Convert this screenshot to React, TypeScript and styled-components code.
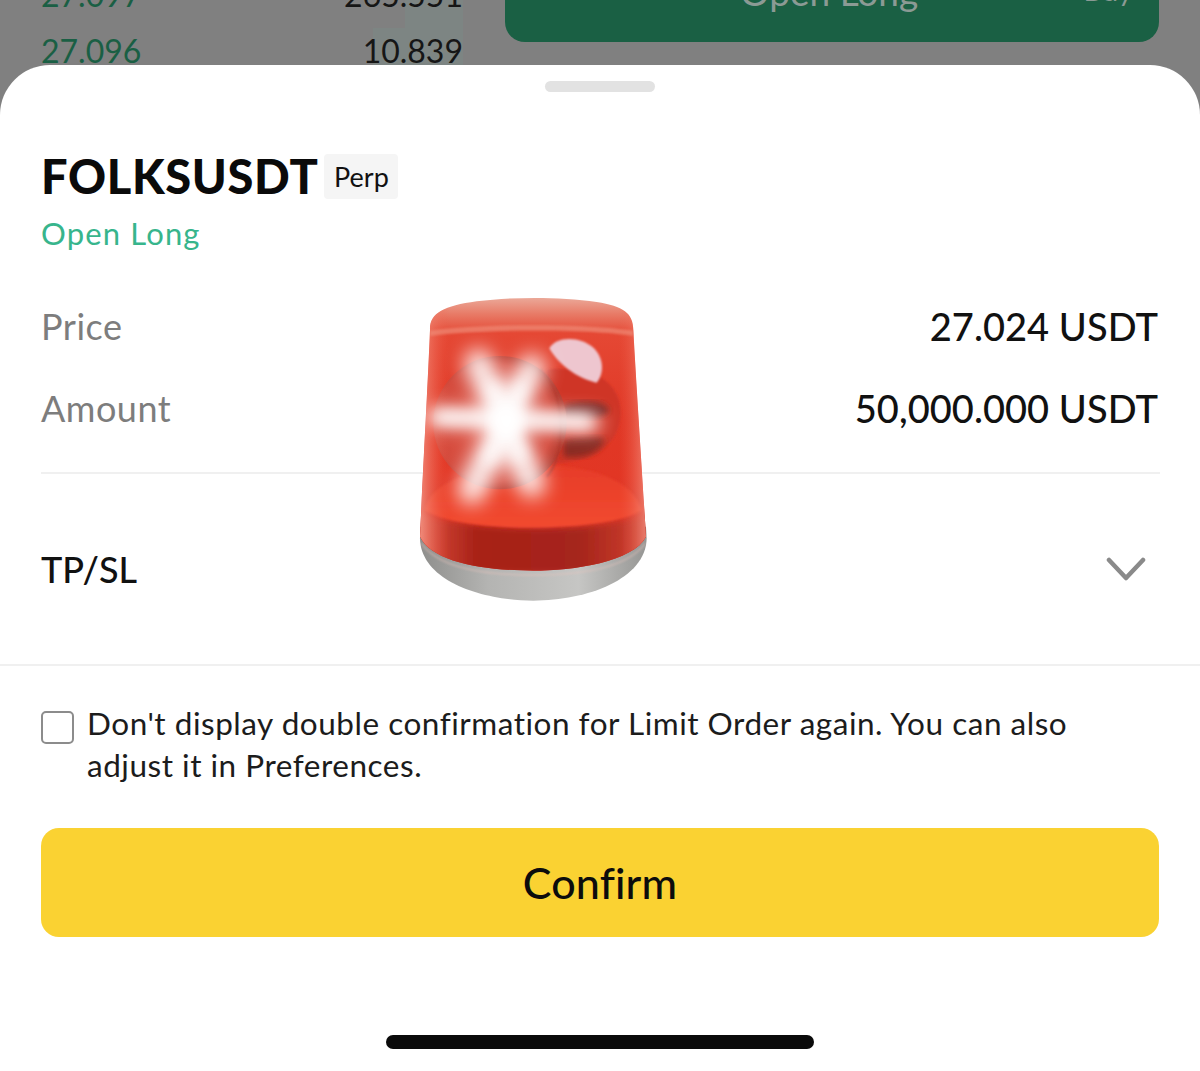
import React from "react";
import styled, { createGlobalStyle } from "styled-components";

const Global = createGlobalStyle`
  html, body { margin: 0; padding: 0; background: #808080; }
  body { font-family: "Lato", "Liberation Sans", sans-serif; }
`;

const Page = styled.div`
  position: relative;
  width: 1200px;
  height: 1071px;
  overflow: hidden;
  display: flex;
  flex-direction: column;
`;

const Backdrop = styled.div`
  height: 65px;
  flex: none;
  overflow: hidden;
  background: #808080;
`;

const BackdropInner = styled.div`
  display: grid;
  grid-template-columns: 422px 654px;
  column-gap: 42px;
  align-items: start;
  padding-left: 41px;
  margin-top: -33px;
`;

const Book = styled.div`
  display: flex;
  flex-direction: column;
`;

const BookRow = styled.div`
  position: relative;
  height: 56px;
  display: flex;
  align-items: center;
  justify-content: space-between;
  font-size: 32px;
  line-height: 56px;
`;

const BookDepth = styled.div<{ $width: number }>`
  position: absolute;
  right: 0;
  top: 5px;
  bottom: -5px;
  width: ${(p) => p.$width}px;
  background: #7a8a86;
  opacity: 0.5;
`;

const BookPrice = styled.span`
  color: #1a5f44;
  position: relative;
`;

const BookAmount = styled.span`
  color: #161616;
  position: relative;
`;

const OpenButton = styled.div`
  box-sizing: border-box;
  height: 75px;
  padding: 3px 26px 0 235px;
  background: #1a6044;
  border-radius: 0 0 20px 20px;
  display: flex;
  align-items: flex-start;
  justify-content: space-between;
  color: #8b9a94;
  font-size: 37px;
  line-height: 44px;
`;

const BuyLabel = styled.span`
  font-size: 29px;
  line-height: 40px;
`;

const Sheet = styled.div`
  flex: 1;
  background: #fff;
  border-radius: 50px 50px 0 0;
  display: flex;
  flex-direction: column;
`;

const Grabber = styled.div`
  align-self: center;
  width: 110px;
  height: 11px;
  margin-top: 16px;
  border-radius: 6px;
  background: #e2e2e2;
`;

const Head = styled.div`
  padding: 61px 41px 0;
`;

const TitleRow = styled.div`
  display: flex;
  align-items: center;
  height: 46px;
`;

const Title = styled.h1`
  margin: 0;
  font-size: 47px;
  line-height: 46px;
  font-weight: 900;
  color: #0a0a0a;
  letter-spacing: 0.65px;
`;

const Tag = styled.span`
  margin-left: 6px;
  width: 74px;
  height: 45px;
  display: flex;
  align-items: center;
  justify-content: center;
  background: #f5f5f5;
  border-radius: 4px;
  font-size: 27px;
  color: #111;
`;

const Side = styled.div`
  margin-top: 14px;
  font-size: 31px;
  line-height: 40px;
  letter-spacing: 1.15px;
  color: #37b58c;
`;

const Rows = styled.div`
  margin: 51px 40px 0 41px;
  display: flex;
  flex-direction: column;
  border-bottom: 2px solid #f0f0f0;
  padding-bottom: 42px;
  row-gap: 38px;
`;

const Row = styled.div`
  display: flex;
  justify-content: space-between;
  align-items: center;
  height: 44px;
  padding-right: 2px;
`;

const Label = styled.span`
  font-size: 36px;
  letter-spacing: 0.5px;
  color: #7d7d7d;
`;

const Value = styled.span`
  font-size: 38px;
  font-weight: 500;
  letter-spacing: 0.05px;
  color: #111;
`;

const Toggle = styled.div`
  height: 190px;
  display: flex;
  align-items: center;
  justify-content: space-between;
  padding: 0 54px 0 41px;
  border-bottom: 2px solid #f0f0f0;
`;

const ToggleLabel = styled.span`
  font-size: 36px;
  font-weight: 500;
  color: #111;
`;

const ChevronGlyph = styled.svg`
  margin-top: 2px;
`;

const Notice = styled.label`
  display: flex;
  gap: 13px;
  padding: 36px 100px 0 41px;
`;

const Box = styled.span`
  flex: none;
  width: 29px;
  height: 29px;
  margin-top: 9px;
  border: 2px solid #8c8c8c;
  border-radius: 5px;
  background: #fff;
`;

const NoticeText = styled.span`
  font-size: 31.5px;
  line-height: 42px;
  letter-spacing: 0.52px;
  color: #1c1c1c;
`;

const Confirm = styled.button`
  margin: 42px 41px 0;
  height: 109px;
  border: none;
  border-radius: 18px;
  background: #fad232;
  font-family: inherit;
  font-size: 43px;
  font-weight: 500;
  letter-spacing: 0.15px;
  color: #0c0c0c;
`;

const HomeBar = styled.div`
  align-self: center;
  width: 428px;
  height: 14px;
  margin-top: 98px;
  border-radius: 7px;
  background: #0a0a0a;
`;

const Siren = styled.svg`
  position: absolute;
  left: 400px;
  top: 280px;
  width: 270px;
  height: 330px;
`;

function SirenIcon() {
  const body =
    "M90 150 C88 100 130 78 230 64 C340 50 480 50 590 66 C670 78 700 100 700 150 C708 300 728 600 738 770 C700 845 520 872 400 872 C250 872 95 845 60 770 C70 550 84 300 90 150 Z";
  return (
    <Siren viewBox="0 0 810 990">
      <defs>
        <linearGradient id="metal" x1="0" x2="1" y1="0" y2="0">
          <stop offset="0" stopColor="#8e8e8c" />
          <stop offset="0.3" stopColor="#b4b4b2" />
          <stop offset="0.7" stopColor="#c6c6c4" />
          <stop offset="1" stopColor="#969694" />
        </linearGradient>
        <linearGradient id="dome" x1="0" x2="0" y1="0" y2="1">
          <stop offset="0" stopColor="#eba898" />
          <stop offset="0.06" stopColor="#e87a66" />
          <stop offset="0.13" stopColor="#e54834" />
          <stop offset="0.45" stopColor="#e03826" />
          <stop offset="0.65" stopColor="#e23624" />
          <stop offset="1" stopColor="#d0352a" />
        </linearGradient>
        <linearGradient id="side" x1="0" x2="1" y1="0" y2="0">
          <stop offset="0" stopColor="#f7a898" stopOpacity="0.7" />
          <stop offset="0.13" stopColor="#f05a45" stopOpacity="0" />
          <stop offset="0.88" stopColor="#f05a45" stopOpacity="0" />
          <stop offset="1" stopColor="#f7a898" stopOpacity="0.6" />
        </linearGradient>
        <linearGradient id="band" x1="0" x2="1" y1="0" y2="0">
          <stop offset="0" stopColor="#e0503f" />
          <stop offset="0.25" stopColor="#a82218" />
          <stop offset="0.7" stopColor="#a5251b" />
          <stop offset="1" stopColor="#d24030" />
        </linearGradient>
        <radialGradient id="lens" cx="0.45" cy="0.5" r="0.55">
          <stop offset="0" stopColor="#e0594a" />
          <stop offset="0.8" stopColor="#d44a3c" />
          <stop offset="1" stopColor="#b03c30" />
        </radialGradient>
        <linearGradient id="floor" x1="0" x2="0" y1="0" y2="1">
          <stop offset="0" stopColor="#e63c28" />
          <stop offset="1" stopColor="#f24a30" />
        </linearGradient>
        <clipPath id="bodyClip"><path d={body} /></clipPath>
        <filter id="b2"><feGaussianBlur stdDeviation="3" /></filter>
        <filter id="b8"><feGaussianBlur stdDeviation="10" /></filter>
        <filter id="b14" x="-30%" y="-30%" width="160%" height="160%"><feGaussianBlur stdDeviation="20" /></filter>
        <filter id="b24" x="-40%" y="-40%" width="180%" height="180%"><feGaussianBlur stdDeviation="28" /></filter>
      </defs>

      <path d="M60 775 C62 905 250 962 400 962 C560 962 738 898 740 775 L738 740 L62 740 Z" fill="url(#metal)" />
      <path d="M64 790 C120 870 270 885 400 885 C540 885 680 865 736 790" stroke="#e8c4bc" strokeWidth="4" fill="none" opacity="0.6" filter="url(#b2)" />
      <path d={body} fill="url(#dome)" />

      <g clipPath="url(#bodyClip)">
        <path d="M55 700 C200 755 600 765 745 700 L745 880 L55 880 Z" fill="url(#band)" filter="url(#b8)" />
        <path d="M75 690 C90 600 240 555 410 555 C570 555 700 600 725 690 C640 755 180 765 75 690 Z" fill="url(#floor)" filter="url(#b2)" />

        <path d="M440 270 C560 250 665 300 662 400 C660 490 590 550 440 552 Z" fill="#cf3628" filter="url(#b2)" />
        <path d="M490 376 C540 356 620 360 628 392 C610 420 540 420 490 410 Z" fill="#7f2620" filter="url(#b8)" />
        <path d="M490 480 C540 470 600 466 614 478 C600 525 540 538 490 530 Z" fill="#8a2a22" filter="url(#b8)" />
        <circle cx="300" cy="428" r="200" fill="url(#lens)" />
        <path d="M420 268 C500 330 500 530 440 590" stroke="#b2352a" strokeWidth="6" fill="none" filter="url(#b2)" />

        <path d={body} fill="url(#side)" />
        <path d="M90 152 C250 130 560 130 700 152 L700 168 C560 146 250 146 90 168 Z" fill="#f0937f" opacity="0.6" filter="url(#b2)" />

        <path d="M448 205 C470 168 540 168 582 205 C615 240 610 285 590 308 C545 300 480 262 448 205 Z" fill="#eec6cf" filter="url(#b2)" />
      </g>

      <g stroke="#ffffff" strokeLinecap="round" filter="url(#b24)" opacity="0.9">
        <path d="M110 410 L580 428" strokeWidth="48" />
        <path d="M235 250 L395 610" strokeWidth="84" />
        <path d="M395 265 L215 630" strokeWidth="84" />
      </g>
      <g stroke="#ffffff" strokeLinecap="round" filter="url(#b14)" opacity="0.95">
        <path d="M115 412 L560 426" strokeWidth="36" />
        <path d="M275 320 L365 530" strokeWidth="34" />
        <path d="M365 320 L265 540" strokeWidth="34" />
      </g>
      <circle cx="318" cy="425" r="40" fill="#fff" filter="url(#b14)" />
    </Siren>
  );
}

function Chevron() {
  return (
    <ChevronGlyph width="40" height="26" viewBox="0 0 40 26" fill="none">
      <path d="M3 3 L20 21 L37 3" stroke="#8a8a8a" strokeWidth="4.5" strokeLinecap="round" strokeLinejoin="round" />
    </ChevronGlyph>
  );
}

export default function App() {
  return (
    <Page>
      <Global />
      <Backdrop>
        <BackdropInner>
          <Book>
            <BookRow>
              <BookDepth $width={58} />
              <BookPrice>27.097</BookPrice>
              <BookAmount>265.551</BookAmount>
            </BookRow>
            <BookRow>
              <BookDepth $width={90} />
              <BookPrice>27.096</BookPrice>
              <BookAmount>10.839</BookAmount>
            </BookRow>
          </Book>
          <OpenButton>
            <span>Open Long</span>
            <BuyLabel>Buy</BuyLabel>
          </OpenButton>
        </BackdropInner>
      </Backdrop>
      <Sheet>
        <Grabber />
        <Head>
          <TitleRow>
            <Title>FOLKSUSDT</Title>
            <Tag>Perp</Tag>
          </TitleRow>
          <Side>Open Long</Side>
        </Head>
        <Rows>
          <Row>
            <Label>Price</Label>
            <Value>27.024 USDT</Value>
          </Row>
          <Row>
            <Label>Amount</Label>
            <Value>50,000.000 USDT</Value>
          </Row>
        </Rows>
        <Toggle>
          <ToggleLabel>TP/SL</ToggleLabel>
          <Chevron />
        </Toggle>
        <Notice>
          <Box />
          <NoticeText>
            Don't display double confirmation for Limit Order again. You can also adjust it in Preferences.
          </NoticeText>
        </Notice>
        <Confirm>Confirm</Confirm>
        <HomeBar />
      </Sheet>
      <SirenIcon />
    </Page>
  );
}
